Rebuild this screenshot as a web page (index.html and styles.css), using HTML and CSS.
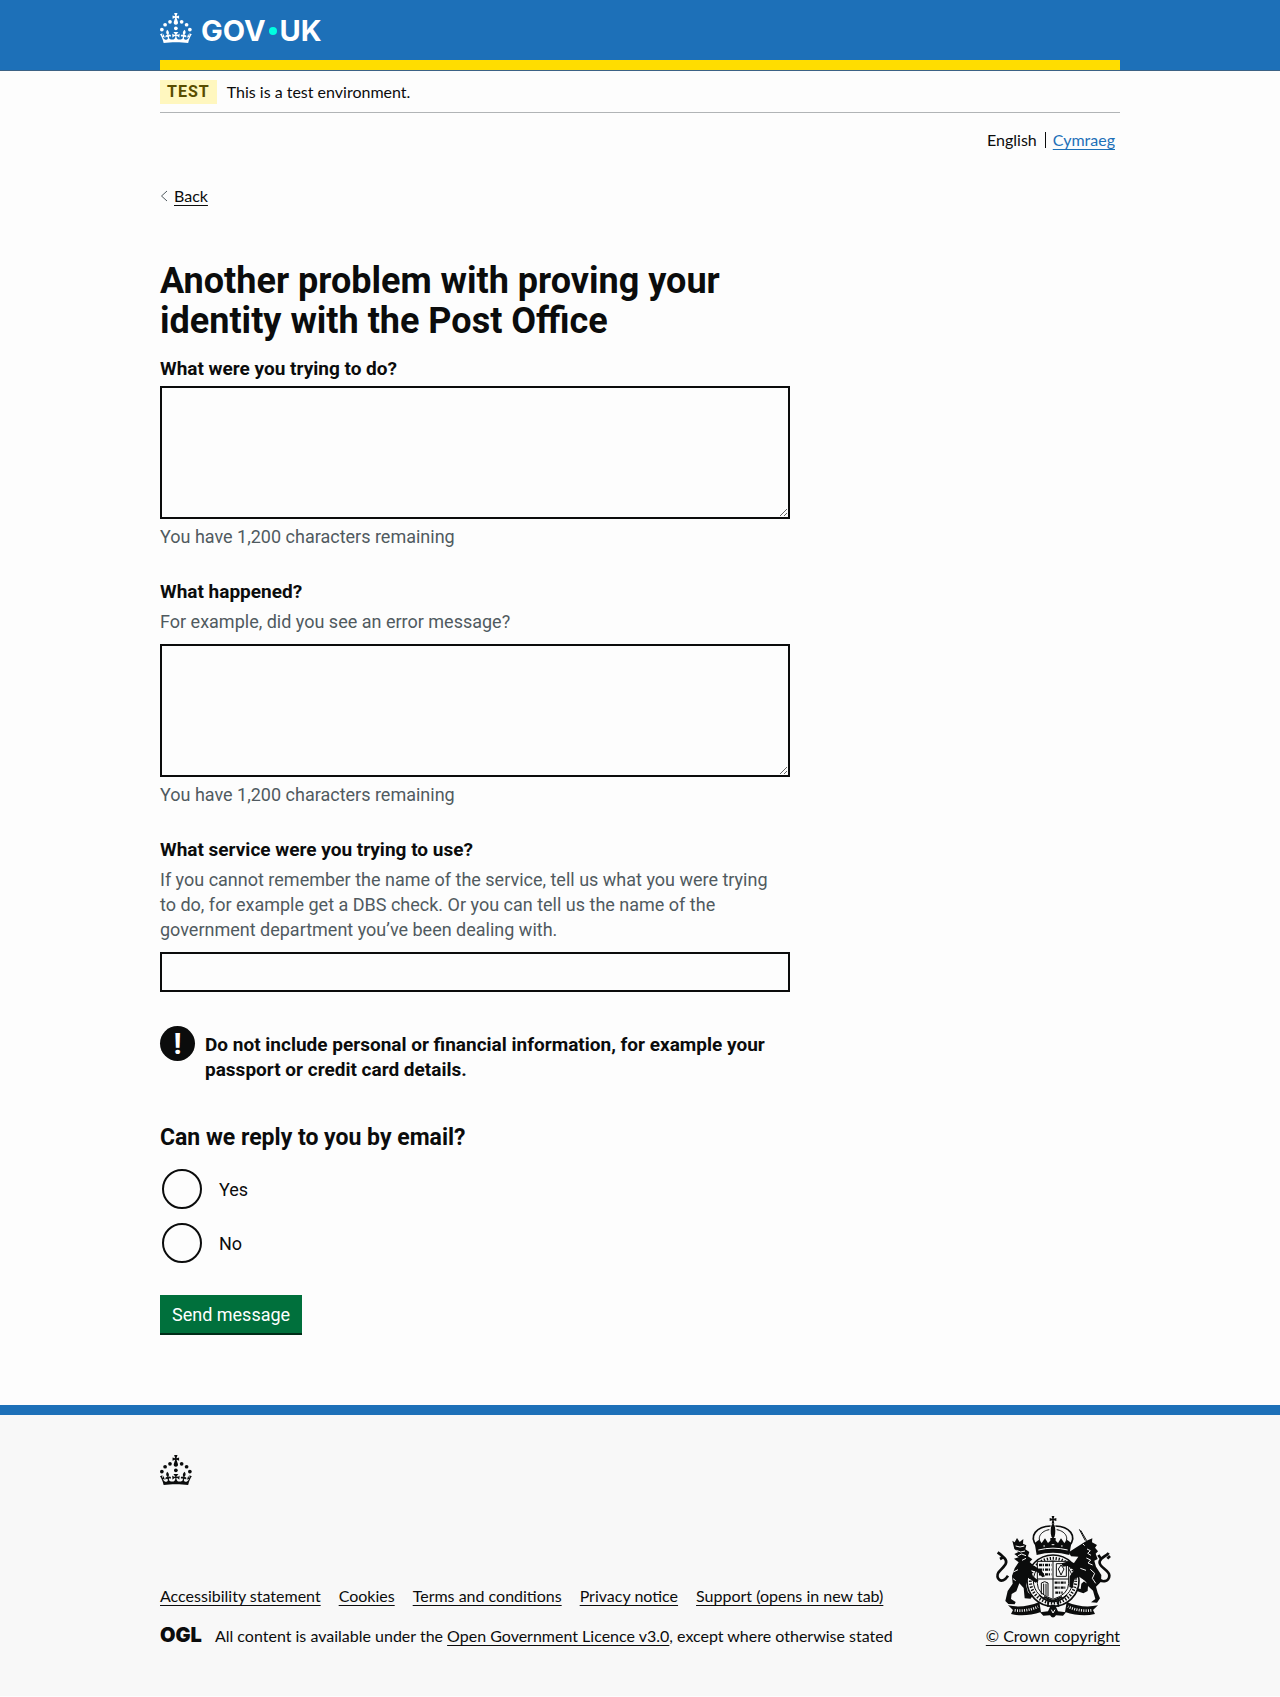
FILE: index.html
```html
<!DOCTYPE html>
<html lang="en">
<head>
<meta charset="utf-8">
<meta name="viewport" content="width=device-width, initial-scale=1">
<title>Another problem with proving your identity with the Post Office - GOV.UK</title>
<link rel="stylesheet" href="styles.css">
</head>
<body>
<svg class="symbols" aria-hidden="true">
  <symbol id="crown" viewBox="0 0 64 60">
    <circle cx="20" cy="17.6" r="3.7"/><circle cx="10.2" cy="23.5" r="3.7"/><circle cx="3.7" cy="33.2" r="3.7"/>
    <circle cx="31.7" cy="30.6" r="3.7"/><circle cx="43.3" cy="17.6" r="3.7"/><circle cx="53.2" cy="23.5" r="3.7"/><circle cx="59.7" cy="33.2" r="3.7"/>
    <path d="M33.1,9.8c.2-.1.3-.3.5-.5l4.6,2.4v-6.8l-4.6,1.5c-.1-.2-.3-.3-.5-.5l1.9-5.9h-6.7l1.9,5.9c-.2.1-.3.3-.5.5l-4.6-1.5v6.8l4.6-2.4c.1.2.3.3.5.5l-2.6,8c-.9,2.8,1.2,5.7,4.1,5.7h0c3,0,5.1-2.9,4.1-5.7l-2.6-8ZM37,37.9s-3.4,3.8-4.1,6.1c2.2,0,4.2-.5,6.4-2.8l-.7,8.5c-2-2.8-4.4-4.1-5.7-3.8.1,3.1.5,6.7,5.8,7.2,3.7.3,6.7-1.5,7-3.8.4-2.6-2-4.3-3.7-1.6-1.4-4.5,2.4-6.1,4.9-3.2-1.9-4.5-1.8-7.7,2.4-10.9,3,4,2.6,7.3-1.2,11.1,2.4-1.3,6.2,0,4,4.6-1.2-2.8-3.7-2.2-4.2.2-.3,1.7.7,3.7,3,4.2,1.9.3,4.7-.9,7-5.9-1.3,0-2.4.7-3.9,1.7l2.4-8c.6,2.3,1.4,3.7,2.2,4.5.6-1.6.5-2.8,0-5.3l5,1.8c-2.6,3.6-5.2,8.7-7.3,17.5-7.4-1.1-15.7-1.7-24.5-1.7h0c-8.8,0-17.1.6-24.5,1.7-2.1-8.9-4.7-13.9-7.3-17.5l5-1.8c-.5,2.5-.6,3.7,0,5.3.8-.8,1.6-2.3,2.2-4.5l2.4,8c-1.5-1-2.6-1.7-3.9-1.7,2.3,5,5.2,6.2,7,5.9,2.3-.4,3.3-2.4,3-4.2-.5-2.4-3-3.1-4.2-.2-2.2-4.6,1.6-6,4-4.6-3.7-3.7-4.2-7.1-1.2-11.1,4.2,3.2,4.3,6.4,2.4,10.9,2.5-2.8,6.3-1.3,4.9,3.2-1.8-2.7-4.1-1-3.7,1.6.3,2.3,3.3,4.1,7,3.8,5.4-.5,5.7-4.2,5.8-7.2-1.3-.2-3.7,1-5.7,3.8l-.7-8.5c2.2,2.3,4.2,2.7,6.4,2.8-.7-2.3-4.1-6.1-4.1-6.1h10.6,0Z"/>
  </symbol>
</svg>

<header class="header">
  <div class="container header-inner">
    <a class="logo" href="#">
      <svg class="crown" aria-hidden="true"><use href="#crown"/></svg>
      <span class="logo-text">GOV<span class="logo-dot"></span>UK</span>
    </a>
  </div>
</header>

<div class="container">
  <div class="phase-banner">
    <strong class="tag">TEST</strong>
    <span>This is a test environment.</span>
  </div>
  <nav class="languages" aria-label="Choose a language">
    <span>English</span>
    <a href="#" lang="cy">Cymraeg</a>
  </nav>
  <a class="back" href="#">
    <svg viewBox="0 0 8 12" aria-hidden="true"><path d="M7 1 1.500 6 7 11"/></svg>
    <span>Back</span>
  </a>

  <main class="main">
    <h1>Another problem with proving your identity with the Post Office</h1>
    <form>
      <div class="group">
        <label class="label" for="doing">What were you trying to do?</label>
        <textarea id="doing" rows="5"></textarea>
        <p class="count">You have 1,200 characters remaining</p>
      </div>
      <div class="group">
        <label class="label" for="happened">What happened?</label>
        <p class="hint" id="happened-hint">For example, did you see an error message?</p>
        <textarea id="happened" rows="5" aria-describedby="happened-hint"></textarea>
        <p class="count">You have 1,200 characters remaining</p>
      </div>
      <div class="group">
        <label class="label" for="service">What service were you trying to use?</label>
        <p class="hint" id="service-hint">If you cannot remember the name of the service, tell us what you were trying to do, for example get a DBS check. Or you can tell us the name of the government department you’ve been dealing with.</p>
        <input class="text-input" id="service" type="text" aria-describedby="service-hint">
      </div>
      <div class="warning">
        <span class="warning-icon" aria-hidden="true">!</span>
        <strong>Do not include personal or financial information, for example your passport or credit card details.</strong>
      </div>
      <fieldset class="radios">
        <legend>Can we reply to you by email?</legend>
        <div class="radio"><input type="radio" id="yes" name="reply"><label for="yes">Yes</label></div>
        <div class="radio"><input type="radio" id="no" name="reply"><label for="no">No</label></div>
      </fieldset>
      <button class="button" type="submit">Send message</button>
    </form>
  </main>
</div>

<footer class="footer">
  <div class="container">
    <svg class="crown" aria-hidden="true"><use href="#crown"/></svg>
    <div class="footer-row">
      <div class="footer-meta">
        <nav class="footer-links" aria-label="Support links">
          <a href="#">Accessibility statement</a>
          <a href="#">Cookies</a>
          <a href="#">Terms and conditions</a>
          <a href="#">Privacy notice</a>
          <a href="#">Support (opens in new tab)</a>
        </nav>
        <div class="licence">
          <span class="ogl">OGL</span>
          <span>All content is available under the <a href="#">Open Government Licence v3.0</a>, except where otherwise stated</span>
        </div>
      </div>
      <div class="copyright">
        <svg class="crest" viewBox="94 45 375 306" aria-hidden="true">
          <!-- royal crown -->
          <path d="M279 45h8l-2 8 8-2v9l-8-2 2 10h-8l2-10-8 2v-9l8 2z"/>
          <ellipse cx="283" cy="90" rx="7" ry="22"/>
          <path class="line thick" d="M236 138C206 104 236 76 276 75M330 138C360 104 330 76 290 75"/>
          <path class="line" d="M248 128C232 108 250 89 272 86M318 128C334 108 316 89 294 86"/>
          <path d="M228 126l12-9 9 9 10-14 9 14 7-7v-8h16v8l7 7 9-14 10 14 9-9 12 9-6 36q-49-14-98 0z"/>
          <path class="cut" d="M239 147q44-11 88 0M254 135h5M279 131h8M307 135h5"/>
          <!-- garter and shield -->
          <ellipse class="line thick" cx="283" cy="239" rx="78" ry="77"/>
          <ellipse class="line dotted" cx="283" cy="239" rx="68" ry="67"/>
          <ellipse class="line" cx="283" cy="239" rx="59" ry="59"/>
          <path class="paper line" d="M236 181h94v66q0 33-47 48-47-15-47-48z"/>
          <path class="line" d="M283 181v112M236 234h94"/>
          <path class="line lions" d="M241 192h37M241 206h37M241 220h37M288 245h34M288 260h32M290 275h22"/>
          <path class="line" d="M293 188h30v38h-30zM307 192l-8 12 8 18 9-18zM248 280V246q10-8 20 0v40M255 248v34M262 248v37"/>
          <path class="line thick" d="M241 282q42 40 84 0M256 287l27 13 27-13M268 300v17M299 300v17"/>
          <!-- lion -->
          <path d="M161 119l7 5 7-13 8 12 11-9-1 14 10 5-3 12 12 8-4 13 13 9-8 8 14 13 21 11 11 19-8 3-14-16-19-5 4 17 18 14-9 6-23-15-6 23 6 21 13 11-5 8-18-1-3-31-13-14-9 24-14 8-2 15 14 9-3 7-19-1-9-9 7-30 15-22-2-23 8-23 12-18-14-11 14-4-13-10 12-6-12-9z"/>
          <path class="line tail" d="M148 224c-20 30-39 7-29-9 15-18 33-29 18-44l-14-13M124 174l11-6M117 154l12 9"/>
          <path class="cut" d="M171 135l13 3 13-3M173 148l13 5 13-3M178 164l11-5 13 5M190 178l12-6M164 213l14-7M163 233l8 6"/>
          <!-- unicorn -->
          <path class="line" d="M362 85l18 34M366 88l18 31"/>
          <path d="M384 119l17-7-1 12 15 8-6 8 9 11-7 7 6 16-10 5 5 18 16 25-1 20-15 15 5 18 7 17-9 13-18-1 13-10-7-25-15-14-1 15-13 7-17-6-4-10 13 3 2-16 10-9-16-12-15 7-5 28-10-4 1-32 13-18-19-13-15 2-3-10 21-6 16 5 13-19-22-1-7-12z"/>
          <path class="line tail" d="M414 224c14 27 38 17 38 0 0-18-34-25-29-43 4-14 18-13 27-25M427 173l-8-11M446 173l8-8"/>
          <path class="cut" d="M373 129l5 5M385 144l10 5-8 8 10 6M383 171l13 6-8 9 14 6M395 205l13 12-7 15 10 15M365 202l17 6M371 236l12 9"/>
          <!-- motto scroll -->
          <path d="M148 313q46 10 94-10l5 30q-49 16-90 6l6-12zM418 313q-46 10-94-10l-5 30q49 16 90 6l-6-12z"/>
          <path class="cut motto" d="M168 328q36 4 70-11M398 328q-36 4-70-11"/>
          <path d="M244 334l24-3 9-20h12l9 20 24 3-9 10-21-1q-9 13-18 0l-20 1z"/>
          <path class="cut" d="M278 326l5 10 6-10"/>
        </svg>
        <a href="#">© Crown copyright</a>
      </div>
    </div>
  </div>
</footer>
</body>
</html>
```
FILE: styles.css
```css
* { box-sizing: border-box; }
body {
  margin: 0;
  background: #fdfdfd;
  color: #0b0c0c;
  font-family: Roboto, "Liberation Sans", sans-serif;
  font-size: 18px;
  line-height: 25px;
}
h1, p, fieldset, legend { margin: 0; padding: 0; border: 0; }
a { color: inherit; text-decoration-thickness: 1px; text-underline-offset: 3px; }
.symbols { position: absolute; width: 0; height: 0; }
.container { max-width: 960px; margin: 0 auto; }
.crown { display: block; width: 32px; height: 30px; fill: currentColor; }

.header { background: #1d70b8; color: #fff; border-bottom: 1px solid #3c6285; }
.header-inner { border-bottom: 10px solid #ffdd00; padding: 13px 0 11px; }
.logo { display: inline-flex; gap: 9px; text-decoration: none; vertical-align: top; }
.logo-text { display: flex; align-items: center; font: 700 29px/36px Inter, sans-serif; }
.logo-dot { width: 8px; height: 8px; margin: 0 3px; border-radius: 50%; background: #00ffe0; }

.phase-banner, .languages, .back, .footer { font-family: Lato, Roboto, sans-serif; font-size: 16px; line-height: 20px; }
.phase-banner { display: flex; align-items: center; gap: 10px; padding: 9px 0 8px; border-bottom: 1px solid #b1b4b6; }
.tag { padding: 2px 7px; background: #fff7bf; color: #594d00; font-family: Roboto, sans-serif; letter-spacing: 1px; }
.languages { display: flex; justify-content: flex-end; padding: 17px 5px 0 0; }
.languages a { margin-left: 8px; padding-left: 8px; color: #1d70b8; position: relative; }
.languages a::before { content: ""; position: absolute; left: 0; top: 2px; bottom: 2px; border-left: 1px solid #0b0c0c; }
.back { display: inline-flex; align-items: center; gap: 6px; margin-top: 36px; text-decoration: none; }
.back svg { width: 8px; height: 12px; fill: none; stroke: #505a5f; stroke-width: 1; }
.back span { text-decoration: underline; text-decoration-thickness: 1px; text-underline-offset: 3px; }

.main { max-width: 630px; padding: 53px 0 70px; }
h1 { margin-bottom: 15px; font-size: 36px; line-height: 40px; }
.group { margin-bottom: 30px; }
.label { display: block; margin-bottom: 5px; font-size: 19px; font-weight: 700; }
.hint { margin-bottom: 10px; padding-right: 10px; color: #505a5f; }
.count { margin-top: 5px; color: #505a5f; }
textarea, .text-input { display: block; width: 100%; margin: 0; padding: 5px; border: 2px solid #0b0c0c; border-radius: 0; background: transparent; font: inherit; }
textarea { height: 133px; resize: vertical; }
.text-input { height: 40px; }
.warning { display: flex; gap: 10px; margin: 34px 0 41px; font-size: 19px; }
.warning strong { padding-top: 6px; }
.warning-icon { flex: none; width: 35px; height: 35px; border-radius: 50%; background: #0b0c0c; color: #fff; font: 700 30px/35px Roboto, sans-serif; text-align: center; }
.radios { display: grid; gap: 10px; margin-bottom: 30px; }
legend { margin-bottom: 14px; font-size: 23px; font-weight: 700; line-height: 30px; }
.radio { display: flex; align-items: center; height: 44px; }
.radio input { appearance: none; width: 40px; height: 40px; margin: 0 2px; border: 2px solid #0b0c0c; border-radius: 50%; }
.radio label { padding: 0 15px; }
.button { display: block; padding: 7px 12px; border: 0; background: #00703c; color: #fff; font: inherit; line-height: 26px; box-shadow: inset 0 -2px #002d18; }

.footer { border-top: 10px solid #1d70b8; background: #f8f8f8; padding: 40px 0 50px; }
.footer-row { display: flex; justify-content: space-between; align-items: flex-end; margin-top: 31px; }
.footer-links { display: flex; flex-wrap: wrap; gap: 10px 18px; margin-bottom: 20px; }
.licence { display: flex; gap: 13px; }
.ogl { font: 900 20px/18px Inter, sans-serif; }
.copyright { display: flex; flex-direction: column; align-items: center; gap: 8px; }
.crest { width: 125px; height: 102px; fill: #0b0c0c; }
.crest .line { fill: none; stroke: #0b0c0c; stroke-width: 3; }
.crest .thick { stroke-width: 5; }
.crest .tail { stroke-width: 8; stroke-linejoin: round; }
.crest .dotted { stroke-width: 9; stroke-dasharray: 4 5; }
.crest .lions { stroke-width: 7; stroke-dasharray: 9 2 4 3; }
.crest .paper { fill: #f8f8f8; }
.crest .cut { fill: none; stroke: #f8f8f8; stroke-width: 3; }
.crest .motto { stroke-width: 8; stroke-dasharray: 3 4; }
```
